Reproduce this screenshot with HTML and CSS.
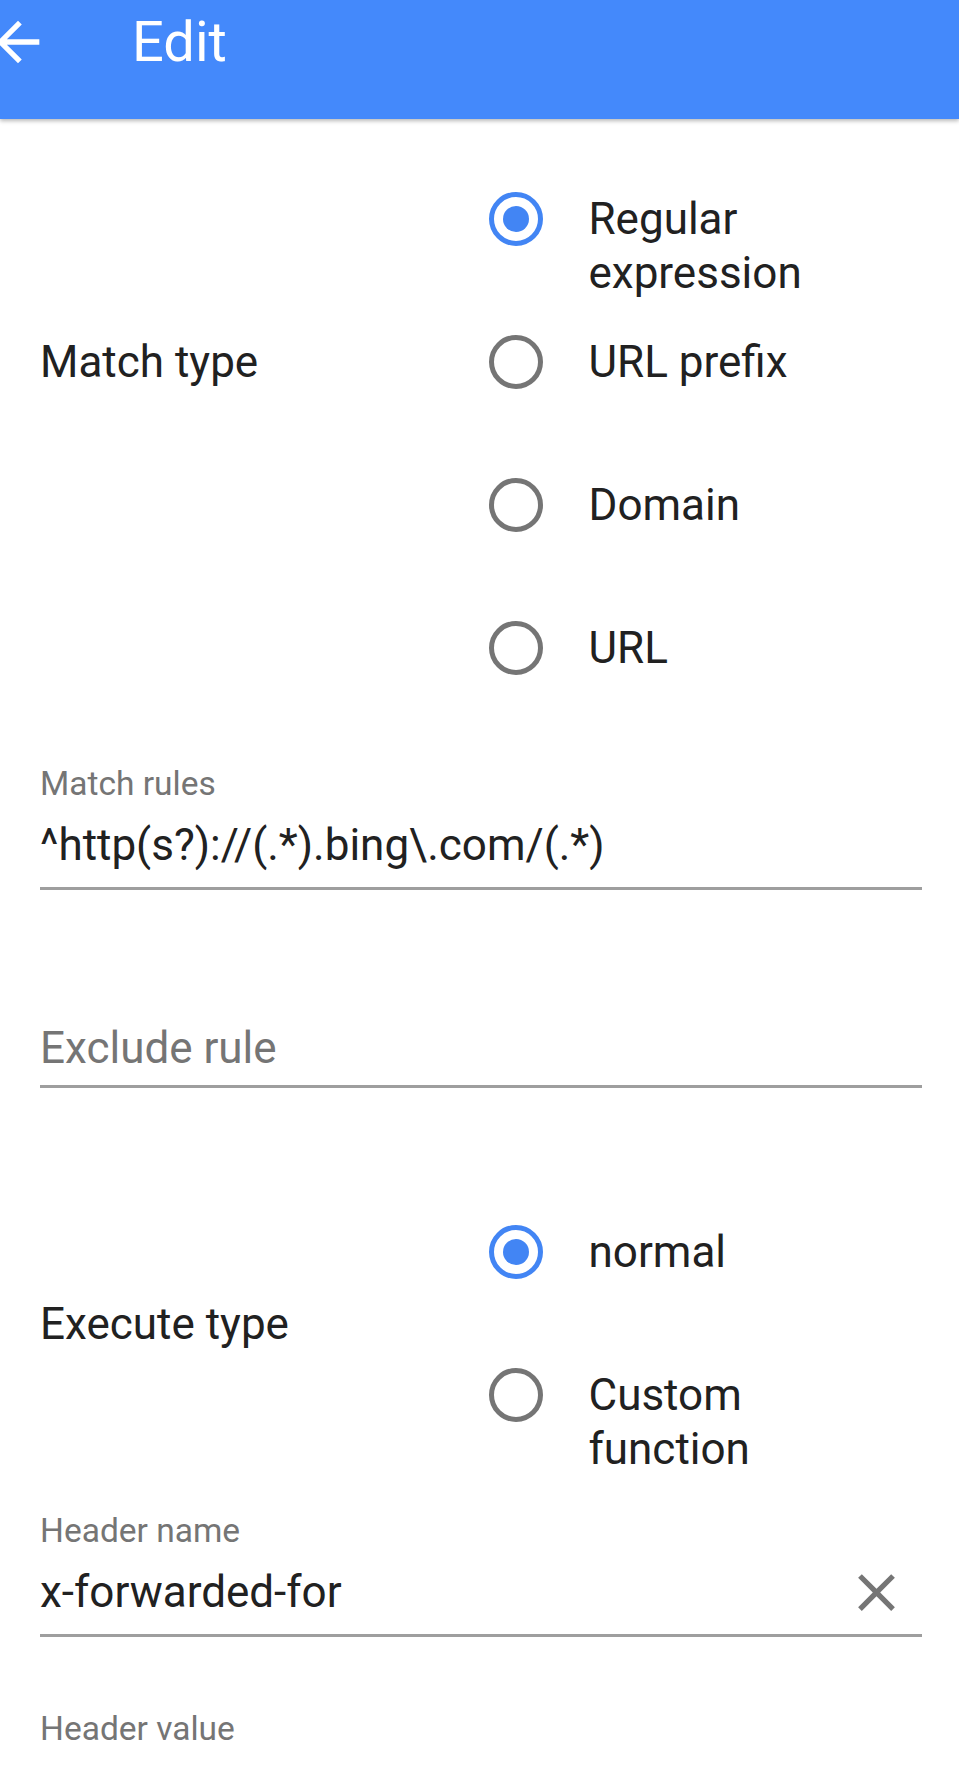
FILE: index.html
```
<!DOCTYPE html>
<html lang="en">
<head>
<meta charset="utf-8">
<title>Edit</title>
<link rel="stylesheet" href="styles.css">
</head>
<body>
<header class="appbar">
  <svg class="back" viewBox="0 0 24 24" aria-hidden="true"><path d="M20 11H7.83l5.59-5.59L12 4l-8 8 8 8 1.41-1.41L7.83 13H20v-2z"/></svg>
  <h1 class="title">Edit</h1>
</header>
<main class="form">
  <section class="choice choice-match">
    <div class="choice-label">Match type</div>
    <div class="options">
      <div class="option"><span class="radio checked"></span><span class="option-text">Regular expression</span></div>
      <div class="option"><span class="radio"></span><span class="option-text">URL prefix</span></div>
      <div class="option"><span class="radio"></span><span class="option-text">Domain</span></div>
      <div class="option"><span class="radio"></span><span class="option-text">URL</span></div>
    </div>
  </section>

  <div class="field field-first">
    <div class="field-label">Match rules</div>
    <div class="field-input"><span class="value">^http(s?)://(.*).bing\.com/(.*)</span></div>
  </div>

  <div class="field">
    <div class="field-label"></div>
    <div class="field-input"><span class="placeholder">Exclude rule</span></div>
  </div>

  <section class="choice choice-exec">
    <div class="choice-label">Execute type</div>
    <div class="options">
      <div class="option"><span class="radio checked"></span><span class="option-text">normal</span></div>
      <div class="option"><span class="radio"></span><span class="option-text">Custom function</span></div>
    </div>
  </section>

  <div class="field field-first">
    <div class="field-label">Header name</div>
    <div class="field-input"><span class="value">x-forwarded-for</span>
      <svg class="clear" viewBox="0 0 24 24" aria-hidden="true"><path d="M19 6.41L17.59 5 12 10.59 6.41 5 5 6.41 10.59 12 5 17.59 6.41 19 12 13.41 17.59 19 19 17.59 13.41 12z"/></svg>
    </div>
  </div>

  <div class="field">
    <div class="field-label">Header value</div>
    <div class="field-input"><span class="value"></span></div>
  </div>
</main>
</body>
</html>
```
FILE: styles.css
```
html, body {
  margin: 0;
  padding: 0;
  background: #ffffff;
}

body {
  font-family: Roboto, "Noto Sans", "Liberation Sans", sans-serif;
  color: #212121;
  overflow: hidden;
}

.appbar {
  display: flex;
  align-items: center;
  height: 84px;
  padding-bottom: 35px;
  background: #4489fb;
  box-shadow: 0 2px 4px rgba(0, 0, 0, 0.28);
  position: relative;
  z-index: 1;
}

.back {
  width: 64px;
  height: 64px;
  margin-left: -14px;
  fill: #ffffff;
  flex: none;
}

.title {
  margin: 0 0 0 82px;
  font-size: 56px;
  line-height: 84px;
  font-weight: 400;
  color: #ffffff;
}

.form {
  padding: 0 37px 0 40px;
}

.choice {
  display: flex;
}

.choice-match {
  margin-top: 28.5px;
}

.choice-exec {
  margin-top: 92.5px;
}

.choice-label {
  width: 449px;
  flex: none;
  font-size: 44px;
  line-height: 54px;
}

.choice-match .choice-label {
  padding-top: 187.5px;
}

.choice-exec .choice-label {
  padding-top: 116.5px;
}

.options {
  display: flex;
  flex-direction: column;
}

.option {
  display: flex;
  align-items: flex-start;
  height: 143px;
  box-sizing: border-box;
  padding-top: 44.5px;
}

.radio {
  width: 54px;
  height: 54px;
  box-sizing: border-box;
  border: 5px solid #757575;
  border-radius: 50%;
  margin-right: 45.5px;
  flex: none;
  display: flex;
  align-items: center;
  justify-content: center;
}

.radio.checked {
  border-color: #4285f4;
}

.radio.checked::after {
  content: "";
  width: 26px;
  height: 26px;
  border-radius: 50%;
  background: #4285f4;
}

.option-text {
  width: 300px;
  font-size: 44px;
  line-height: 54px;
  color: #212121;
}

.field {
  padding-top: 72px;
}

.field-first {
  padding-top: 44.5px;
}

.field-label {
  height: 40px;
  font-size: 33.5px;
  line-height: 40px;
  color: #757575;
  margin-bottom: 14px;
}

.field-input {
  display: flex;
  align-items: center;
  height: 54px;
  padding-bottom: 15px;
  border-bottom: 3px solid #9e9e9e;
  font-size: 44px;
  line-height: 54px;
}

.value {
  flex: 1;
  color: #212121;
  white-space: nowrap;
}

.placeholder {
  flex: 1;
  color: #757575;
  padding-top: 5px;
  margin-bottom: -5px;
}

.clear {
  width: 63px;
  height: 63px;
  margin: -4.5px 14px -4.5px 0;
  fill: #757575;
  flex: none;
}
```
